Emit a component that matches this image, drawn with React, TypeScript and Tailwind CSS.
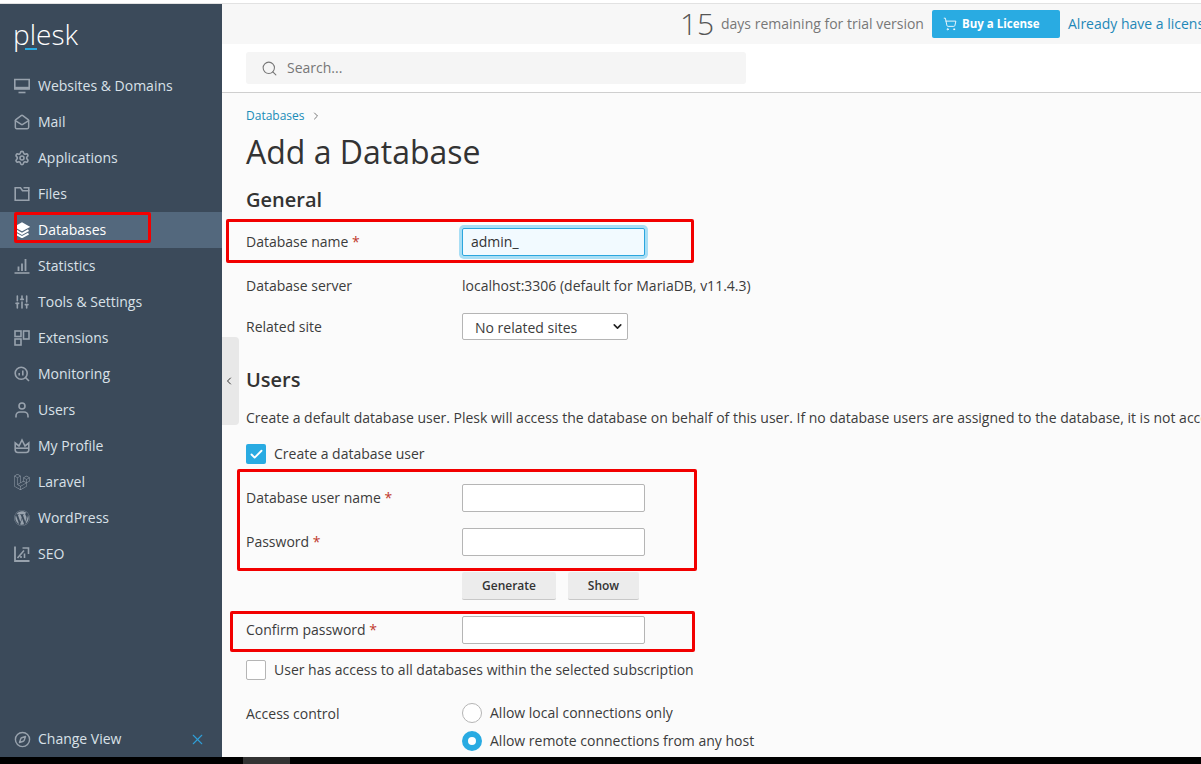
import React from "react";
import { MailOpen, Settings, SlidersVertical, Search, Compass, X, ShoppingCart, ChevronLeft, ChevronRight, Check, ChevronDown } from "lucide-react";
import { FaWordpress, FaLaravel } from "react-icons/fa";

type P = { className?: string };
const S = ({ className, children }: P & { children: React.ReactNode }) => (
  <svg className={className} viewBox="0 0 16 16" fill="none" stroke="currentColor" strokeWidth="1.6">
    {children}
  </svg>
);
const Mon = (p: P) => (
  <S {...p}>
    <path d="M.8 1.5h14.4v9.5H.8z" />
    <path d="M.8 10h14.4" strokeWidth="2.4" />
    <path d="M4.5 14.5h7" />
  </S>
);
const Fold = (p: P) => (
  <S {...p}>
    <path d="M1.2 1.8h5.3l2 3h6.3v9.4H1.2z" />
    <path d="M9.5 1.8h5.3v3" />
  </S>
);
const Lay = (p: P) => (
  <S {...p}>
    <path d="M8 1.2L14.5 4.8L8 8.4L1.5 4.8Z" fill="currentColor" />
    <path d="M1.5 8.2L8 11.8L14.5 8.2" strokeWidth="2" />
    <path d="M1.5 11.6L8 15.2L14.5 11.6" strokeWidth="2" />
  </S>
);
const Stat = (p: P) => (
  <S {...p}>
    <path d="M.5 15h15" />
    <path d="M4.5 13V8.5M8 13V5.5M11.5 13V1" strokeWidth="1.8" />
  </S>
);
const Ext = (p: P) => (
  <S {...p}>
    <rect x="1" y="1" width="6" height="5.5" />
    <rect x="1" y="9" width="6" height="6" />
    <rect x="9.5" y="1" width="5.5" height="8" />
  </S>
);
const Moni = (p: P) => (
  <S {...p}>
    <circle cx="7.2" cy="7.2" r="6" />
    <path d="M5.2 9.5V7M8.8 9.5V4.5M11.5 11.5L15 15" />
  </S>
);
const Usr = (p: P) => (
  <S {...p}>
    <circle cx="8" cy="4" r="3" />
    <path d="M2 15.5v-1.5a4 4 0 0 1 4-4h4a4 4 0 0 1 4 4v1.5" />
  </S>
);
const Crn = (p: P) => (
  <S {...p}>
    <path d="M1.2 5L5 8L8 2L11 8L14.8 5V12.2a2.6 2.6 0 0 1-2.6 2.3H3.8a2.6 2.6 0 0 1-2.6-2.3Z" />
    <path d="M1.2 10.2h13.6" />
  </S>
);
const Seo = (p: P) => (
  <S {...p}>
    <path d="M1 .5V15h14.5" strokeWidth="1.8" />
    <path d="M3.5 12L10 4.5M10.5 12V7.5M7 12V10" />
    <path d="M8.5 2h6v6" />
  </S>
);
const Gear = ({ className }: P) => <Settings className={className} strokeWidth={2.4} />;
const Sliders = ({ className }: P) => <SlidersVertical className={className} strokeWidth={2.4} />;
const Envelope = ({ className }: P) => <MailOpen className={className} strokeWidth={2.2} />;

const items: [string, any, boolean?][] = [
  ["Websites & Domains", Mon],
  ["Mail", Envelope],
  ["Applications", Gear],
  ["Files", Fold],
  ["Databases", Lay, true],
  ["Statistics", Stat],
  ["Tools & Settings", Sliders],
  ["Extensions", Ext],
  ["Monitoring", Moni],
  ["Users", Usr],
  ["My Profile", Crn],
  ["Laravel", FaLaravel],
  ["WordPress", FaWordpress],
  ["SEO", Seo],
];

const Label = ({ text, req }: { text: string; req?: boolean }) => (
  <div className={`w-[216px] shrink-0 text-[14px] text-[#3c3c3c] ${req ? "pb-[2px]" : ""}`}>
    {text}
    {req && <span className="text-[#c0392b]"> *</span>}
  </div>
);

const Field = ({ label, mt }: { label: string; mt: string }) => (
  <div className={`flex items-center h-[28px] ${mt}`}>
    <Label text={label} req />
    <div className="w-[183px] h-[28px] bg-white border border-[#b5b5b5] rounded-[2px]" />
  </div>
);

const Red = ({ className }: { className: string }) => (
  <div className={`absolute border-[3px] border-[#f20000] rounded-[2px] pointer-events-none ${className}`} />
);

export default function App() {
  return (
    <div className="relative w-[1201px] h-[764px] overflow-hidden flex flex-col bg-white font-['Open_Sans',sans-serif]">
      <div className="h-[4px] shrink-0 bg-white border-b border-[#e2e2e2]" />
      <div className="flex-1 flex min-h-0">
        <aside className="w-[222px] shrink-0 bg-[#3b4a5a] flex flex-col text-[#d9e1e8] text-[14px]">
          <div className="h-[64px] shrink-0 pl-[13px] relative">
            <div className="text-[28px] font-light leading-[38px] pt-[11px] text-white">plesk</div>
            <div className="absolute left-[25px] top-[44px] w-[12px] h-[2px] bg-[#29abe2]" />
          </div>
          {items.map(([name, Icon, active]) => (
            <div
              key={name}
              className={`h-[36px] shrink-0 flex items-center pl-[14px] ${active ? "bg-[#53687d] text-white font-medium" : ""}`}
            >
              <Icon className={`w-[16px] h-[16px] mr-[8px] ${active ? "text-white" : "text-[#98a2ad]"}`} />
              <span className="pb-[2px]">{name}</span>
            </div>
          ))}
          <div className="mt-auto mb-[2px] h-[32px] flex items-center pl-[14px] pr-[16px]">
            <Compass className="w-[17px] h-[17px] mr-[7px] text-[#98a2ad]" />
            <span className="pb-[2px]">Change View</span>
            <X className="w-[17px] h-[17px] ml-auto text-[#2f9fd8]" strokeWidth={1.5} />
          </div>
        </aside>
        <main className="flex-1 min-w-0 flex flex-col bg-[#fbfbfb]">
          <div className="h-[40px] shrink-0 bg-[#f7f7f7] flex items-center pl-[458px] whitespace-nowrap">
            <span className="text-[30px] font-light text-[#555] w-[41px] shrink-0 pb-[2px]">15</span>
            <span className="text-[14px] text-[#777] w-[211px] shrink-0 pb-[2px]">days remaining for trial version</span>
            <div className="w-[128px] h-[28px] shrink-0 bg-[#29abe2] rounded-[2px] flex items-center pl-[11px] text-white text-[11.5px] font-bold mr-[8px]">
              <ShoppingCart className="w-[14px] h-[14px] mr-[5px]" strokeWidth={1.5} />
              Buy a License
            </div>
            <span className="text-[14px] text-[#1e88b8] shrink-0 pb-[2px]">Already have a license?</span>
          </div>
          <div className="h-[49px] shrink-0 bg-white border-b border-[#cfcfcf] pl-[24px] pt-[8px]">
            <div className="w-[500px] h-[32px] bg-[#f5f5f5] rounded-[3px] flex items-center pl-[15px] text-[14px] text-[#777]">
              <Search className="w-[17px] h-[17px] mr-[9px] text-[#777]" strokeWidth={1.5} />
              <span className="pb-[2px]">Search...</span>
            </div>
          </div>
          <div className="flex-1 min-h-0 pl-[24px] flex flex-col overflow-hidden">
            <div className="mt-[13px] h-[20px] shrink-0 flex items-center text-[12px] text-[#1a8cb8]">
              Databases
              <ChevronRight className="w-[12px] h-[12px] ml-[5px] text-[#777]" />
            </div>
            <h1 className="mt-[4px] h-[46px] shrink-0 text-[32px] leading-[44px] text-[#333]">Add a Database</h1>
            <h2 className="mt-[11px] h-[26px] shrink-0 text-[20px] leading-[26px] font-semibold text-[#333]">General</h2>
            <div className="mt-[15px] h-[28px] shrink-0 flex items-center">
              <Label text="Database name" req />
              <div className="w-[183px] h-[28px] bg-[#f2faff] border border-[#2ba6de] rounded-[2px] ring-[3px] ring-[#a8def5] pl-[8px] text-[14px] leading-[26px] text-[#333]">
                admin_
              </div>
            </div>
            <div className="mt-[15px] h-[28px] shrink-0 flex items-center text-[14px] text-[#3c3c3c]">
              <Label text="Database server" />
              <span>localhost:3306 (default for MariaDB, v11.4.3)</span>
            </div>
            <div className="mt-[14px] h-[27px] shrink-0 flex items-center text-[14px] text-[#3c3c3c]">
              <Label text="Related site" />
              <div className="w-[166px] h-[27px] bg-white border border-[#b5b5b5] rounded-[2px] flex items-center pl-[12px] pr-[3px]">
                <span className="pt-[2px]">No related sites</span>
                <ChevronDown className="w-[13px] h-[13px] ml-auto text-[#222]" strokeWidth={3} />
              </div>
            </div>
            <h2 className="mt-[27px] h-[26px] shrink-0 text-[20px] leading-[26px] font-semibold text-[#333]">Users</h2>
            <p className="mt-[15px] h-[20px] shrink-0 text-[14px] leading-[20px] text-[#3c3c3c] whitespace-nowrap">
              Create a default database user. Plesk will access the database on behalf of this user. If no database users are assigned to the database, it is not accessible.
            </p>
            <div className="mt-[16px] h-[20px] shrink-0 flex items-center text-[14px] text-[#3c3c3c]">
              <div className="w-[20px] h-[20px] bg-[#29abe2] rounded-[2px] flex items-center justify-center mr-[8px]">
                <Check className="w-[15px] h-[15px] text-white" strokeWidth={3} />
              </div>
              <span className="pb-[2px]">Create a database user</span>
            </div>
            <Field label="Database user name" mt="mt-[20px]" />
            <Field label="Password" mt="mt-[16px]" />
            <div className="mt-[16px] h-[28px] shrink-0 flex pl-[216px] text-[12px] font-semibold text-[#333]">
              <div className="w-[94px] h-[28px] bg-[#ececec] border-b border-[#c8c8c8] rounded-[2px] flex items-center justify-center mr-[12px]">Generate</div>
              <div className="w-[71px] h-[28px] bg-[#ececec] border-b border-[#c8c8c8] rounded-[2px] flex items-center justify-center">Show</div>
            </div>
            <Field label="Confirm password" mt="mt-[16px]" />
            <div className="mt-[16px] h-[20px] shrink-0 flex items-center text-[14px] text-[#3c3c3c]">
              <div className="w-[20px] h-[20px] bg-white border border-[#b5b5b5] rounded-[2px] mr-[8px]" />
              <span className="pb-[2px]">User has access to all databases within the selected subscription</span>
            </div>
            <div className="mt-[23px] shrink-0 flex text-[14px] text-[#3c3c3c]">
              <div className="w-[216px] leading-[20px] pt-[1px]">Access control</div>
              <div className="flex flex-col gap-[8px]">
                <div className="h-[20px] flex items-center">
                  <div className="w-[20px] h-[20px] rounded-full bg-white border border-[#b5b5b5] mr-[8px]" />
                  <span className="pb-[2px]">Allow local connections only</span>
                </div>
                <div className="h-[20px] flex items-center">
                  <div className="w-[20px] h-[20px] rounded-full bg-white border-[6px] border-[#29abe2] mr-[8px]" />
                  <span className="pb-[2px]">Allow remote connections from any host</span>
                </div>
              </div>
            </div>
          </div>
        </main>
      </div>
      <div className="h-[7px] shrink-0 bg-black pl-[243px]">
        <div className="w-[47px] h-[7px] bg-[#333]" />
      </div>

      <div className="absolute left-[222px] top-[337px] w-[17px] h-[88px] bg-[#e8e8e8] rounded-r-[4px] flex items-center pl-[1px]">
        <ChevronLeft className="w-[12px] h-[12px] text-[#333]" />
      </div>
      <Red className="left-[14px] top-[212px] w-[137px] h-[31px]" />
      <Red className="left-[226px] top-[219px] w-[468px] h-[44px]" />
      <Red className="left-[237px] top-[469px] w-[460px] h-[102px]" />
      <Red className="left-[230px] top-[611px] w-[465px] h-[41px]" />
    </div>
  );
}
